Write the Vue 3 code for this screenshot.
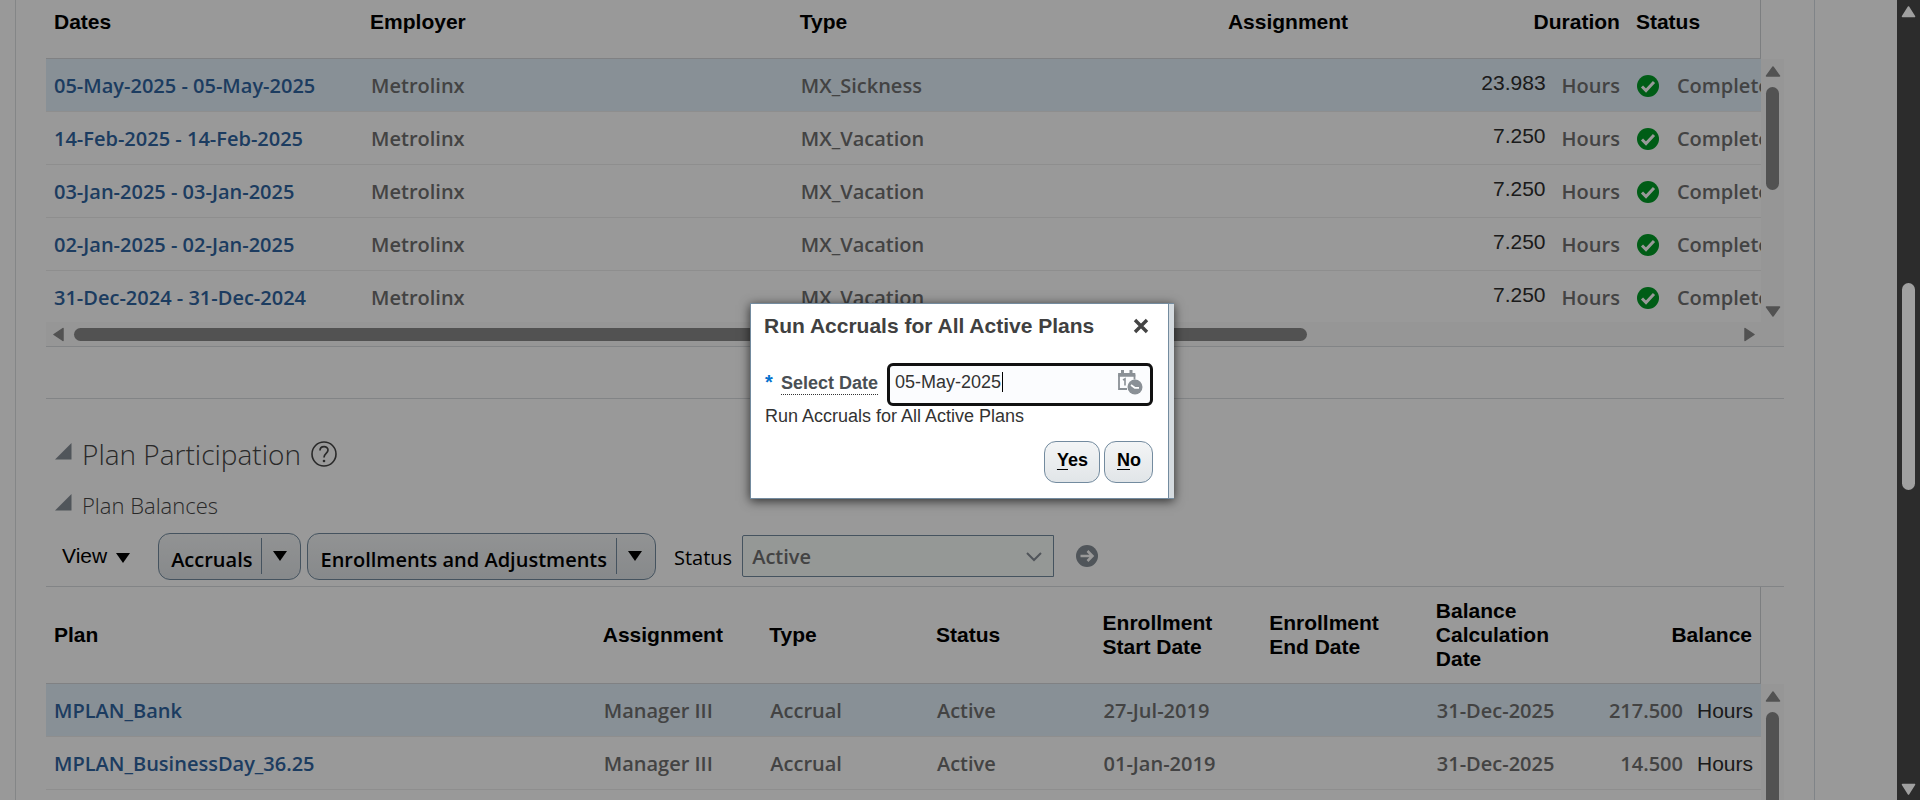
<script setup>
import { ref } from 'vue'

const absences = [
  { dates: '05-May-2025 - 05-May-2025', type: 'MX_Sickness', duration: '23.983' },
  { dates: '14-Feb-2025 - 14-Feb-2025', type: 'MX_Vacation', duration: '7.250' },
  { dates: '03-Jan-2025 - 03-Jan-2025', type: 'MX_Vacation', duration: '7.250' },
  { dates: '02-Jan-2025 - 02-Jan-2025', type: 'MX_Vacation', duration: '7.250' },
  { dates: '31-Dec-2024 - 31-Dec-2024', type: 'MX_Vacation', duration: '7.250' }
]

const plans = [
  { name: 'MPLAN_Bank', start: '27-Jul-2019', balance: '217.500' },
  { name: 'MPLAN_BusinessDay_36.25', start: '01-Jan-2019', balance: '14.500' }
]

const accrualDate = ref('05-May-2025')
const status = ref('Active')
</script>

<template>
  <div class="window">
    <div class="viewport">
      <main class="panel">
        <section class="grid absences">
          <div class="grid-row">
            <div class="table-wrap">
              <table>
                <colgroup>
                  <col class="a-dates"><col class="a-employer"><col class="a-type"><col class="a-assign"><col class="a-duration"><col>
                </colgroup>
                <thead>
                  <tr>
                    <th>Dates</th><th>Employer</th><th>Type</th><th>Assignment</th><th class="right">Duration</th><th>Status</th>
                  </tr>
                </thead>
                <tbody>
                  <tr v-for="(row, i) in absences" :key="row.dates" :class="{ selected: i === 0 }">
                    <td><a href="#">{{ row.dates }}</a></td>
                    <td>Metrolinx</td>
                    <td>{{ row.type }}</td>
                    <td></td>
                    <td><div class="amount wide"><span class="plain raised">{{ row.duration }}</span><span>Hours</span></div></td>
                    <td>
                      <div class="state">
                        <svg width="22" height="22" viewBox="0 0 22 22" aria-hidden="true">
                          <circle cx="11" cy="11" r="11" fill="#009b26" />
                          <path d="M5 11.500l4 4 8-8.500" fill="none" stroke="#fff" stroke-width="3" />
                        </svg>
                        <span>Completed</span>
                      </div>
                    </td>
                  </tr>
                </tbody>
              </table>
            </div>
            <div class="vbar">
              <svg class="arrow" width="16" height="11" viewBox="0 0 16 11"><path d="M8 1l6.500 9h-13z" fill="#898989" stroke="#898989" stroke-width="1.500" stroke-linejoin="round" /></svg>
              <div class="vthumb short"></div>
              <svg class="arrow last" width="16" height="11" viewBox="0 0 16 11"><path d="M8 10l6.500-9h-13z" fill="#898989" stroke="#898989" stroke-width="1.500" stroke-linejoin="round" /></svg>
            </div>
          </div>
          <div class="hbar">
            <svg width="11" height="15" viewBox="0 0 11 15"><path d="M1 7.500l9-6v12z" fill="#898989" stroke="#898989" stroke-width="1.500" stroke-linejoin="round" /></svg>
            <div class="htrack"><div class="hthumb"></div></div>
            <svg width="11" height="15" viewBox="0 0 11 15"><path d="M10 7.500l-9-6v12z" fill="#898989" stroke="#898989" stroke-width="1.500" stroke-linejoin="round" /></svg>
          </div>
        </section>

        <section class="participation">
          <h2>
            <svg class="disclose" width="17" height="17" viewBox="0 0 17 17" aria-hidden="true"><path d="M16.500 0v16.500H0z" fill="#868e96" /></svg>
            <span>Plan Participation</span>
            <svg class="help" width="26" height="26" viewBox="0 0 26 26" role="img" aria-label="Help">
              <circle cx="13" cy="13" r="12" fill="none" stroke="#454545" stroke-width="1.600" />
              <path d="M9 9.500c0-5 8-5 8-.5 0 3.500-4 3.300-4 7.500" fill="none" stroke="#454545" stroke-width="1.700" />
              <circle cx="13" cy="20" r="1.300" fill="#454545" />
            </svg>
          </h2>
          <h3>
            <svg class="disclose" width="17" height="17" viewBox="0 0 17 17" aria-hidden="true"><path d="M16.500 0v16.500H0z" fill="#868e96" /></svg>
            <span>Plan Balances</span>
          </h3>
          <div class="toolbar">
            <button type="button" class="view">View
              <svg width="14" height="10" viewBox="0 0 14 10" aria-hidden="true"><path d="M0 0h14l-7 10z" /></svg>
            </button>
            <div class="split">
              <button type="button" class="main">Accruals</button>
              <button type="button" class="drop" aria-label="Accruals menu"><svg width="14" height="10" viewBox="0 0 14 10"><path d="M0 0h14l-7 10z" /></svg></button>
            </div>
            <div class="split">
              <button type="button" class="main">Enrollments and Adjustments</button>
              <button type="button" class="drop" aria-label="Enrollments menu"><svg width="14" height="10" viewBox="0 0 14 10"><path d="M0 0h14l-7 10z" /></svg></button>
            </div>
            <label for="status">Status</label>
            <div class="select">
              <select id="status" v-model="status"><option>Active</option></select>
              <svg width="16" height="10" viewBox="0 0 16 10" aria-hidden="true"><path d="M1 1l7 7 7-7" fill="none" stroke="#868e96" stroke-width="2" /></svg>
            </div>
            <button type="button" class="go" aria-label="Go">
              <svg width="22" height="22" viewBox="0 0 22 22"><circle cx="11" cy="11" r="11" fill="#868e96" /><path d="M4.500 11h12M11.500 6l5 5-5 5" fill="none" stroke="#fff" stroke-width="2.500" /></svg>
            </button>
          </div>

          <div class="grid plans">
            <div class="grid-row">
              <div class="table-wrap">
                <table>
                  <colgroup>
                    <col><col class="p-col"><col class="p-col"><col class="p-col"><col class="p-col"><col class="p-col"><col class="p-col"><col class="p-col">
                  </colgroup>
                  <thead>
                    <tr>
                      <th>Plan</th><th>Assignment</th><th>Type</th><th>Status</th><th>Enrollment Start Date</th><th>Enrollment End Date</th><th>Balance Calculation Date</th><th class="right">Balance</th>
                    </tr>
                  </thead>
                  <tbody>
                    <tr v-for="(row, i) in plans" :key="row.name" :class="{ selected: i === 0 }">
                      <td><a href="#">{{ row.name }}</a></td>
                      <td>Manager III</td>
                      <td>Accrual</td>
                      <td>Active</td>
                      <td>{{ row.start }}</td>
                      <td></td>
                      <td>31-Dec-2025</td>
                      <td><div class="amount"><span>{{ row.balance }}</span><span class="plain">Hours</span></div></td>
                    </tr>
                    <tr><td colspan="8"></td></tr>
                  </tbody>
                </table>
              </div>
              <div class="vbar">
                <svg class="arrow" width="16" height="11" viewBox="0 0 16 11"><path d="M8 1l6.500 9h-13z" fill="#898989" stroke="#898989" stroke-width="1.500" stroke-linejoin="round" /></svg>
                <div class="vthumb"></div>
              </div>
            </div>
          </div>
        </section>
      </main>
      <div class="scrim"></div>
    </div>

    <div class="page-bar">
      <svg width="15" height="12" viewBox="0 0 15 12"><path d="M7.500 1l6 9.500h-12z" fill="#a0a0a0" stroke="#a0a0a0" stroke-width="1.500" stroke-linejoin="round" /></svg>
      <div class="page-track"><div class="page-thumb"></div></div>
      <svg width="15" height="12" viewBox="0 0 15 12"><path d="M7.500 11l6-9.500h-12z" fill="#a0a0a0" stroke="#a0a0a0" stroke-width="1.500" stroke-linejoin="round" /></svg>
    </div>

    <div class="modal-layer">
      <div class="dialog" role="dialog" aria-labelledby="dialog-title">
        <form class="dialog-body" @submit.prevent>
          <header>
            <h1 id="dialog-title">Run Accruals for All Active Plans</h1>
            <button type="button" class="close" aria-label="Close">
              <svg width="16" height="16" viewBox="0 0 16 16"><path d="M2 2l12 12M14 2L2 14" stroke="#444" stroke-width="3.400" /></svg>
            </button>
          </header>
          <div class="field">
            <span class="required">*</span>
            <label for="accrual-date">Select Date</label>
            <div class="box">
              <input id="accrual-date" v-model="accrualDate" type="text">
              <span class="caret"></span>
              <button type="button" aria-label="Choose date">
                <svg width="25" height="25" viewBox="0 0 25 25">
                  <path d="M1 5.500h15.500v4M1 4.500v14.500h8" fill="none" stroke="#8a9096" stroke-width="1.800" />
                  <path d="M.1 3h17.200v3.500H.1z" fill="#8a9096" />
                  <path d="M3 0h3v5H3zM11.500 0h3v5h-3z" fill="#8a9096" />
                  <path d="M5 10l2-1.200v6.700" fill="none" stroke="#8a9096" stroke-width="1.600" />
                  <circle cx="17" cy="17" r="7.500" fill="#8a9096" />
                  <path d="M13 15l3.800 2.800h4.200" fill="none" stroke="#fff" stroke-width="1.700" />
                </svg>
              </button>
            </div>
          </div>
          <p>Run Accruals for All Active Plans</p>
          <footer>
            <button type="button"><u>Y</u>es</button>
            <button type="button"><u>N</u>o</button>
          </footer>
        </form>
      </div>
    </div>
  </div>
</template>

<style>
body { background: #999; }
</style>

<style scoped>
* { box-sizing: border-box; }
.window {
  display: flex;
  height: 100vh;
  overflow: hidden;
  font-family: "Liberation Sans", Arial, sans-serif;
  font-size: 21px;
  line-height: 24px;
  color: #000;
}
button, select, input { font: inherit; color: inherit; margin: 0; padding: 0; border: 0; background: none; }
svg { display: block; flex: none; }
.viewport { position: relative; flex: 1; min-width: 0; background: #fff; overflow: hidden; }
.scrim { position: absolute; inset: 0; background: rgba(0, 0, 0, 0.4); }
.panel {
  margin: 0 82px 0 15px;
  padding: 0 30px;
  min-height: 100vh;
  border-left: 1px solid #dcdfe2;
  border-right: 1px solid #d5dde3;
}
.grid { border-bottom: 1px solid #d9dcdf; }
.grid-row { display: flex; }
.table-wrap { flex: 1; min-width: 0; }
table { width: 100%; table-layout: fixed; border-collapse: separate; border-spacing: 0; }
th {
  padding: 10px 8px 0 8px;
  text-align: left;
  font-weight: bold;
  vertical-align: top;
  border-bottom: 1px solid #d5d8db;
}
th:last-child { border-right: 1px solid #cfd2d5; }
.absences th { height: 59px; }
.plans th { height: 97px; vertical-align: middle; padding-top: 0; }
td {
  height: 53px;
  padding: 2px 8px 0 9px;
  border-bottom: 1px solid #ededed;
  font-family: "Open Sans", "Noto Sans", sans-serif;
  font-size: 20px;
  font-weight: 600;
  color: #707070;
  white-space: nowrap;
  overflow: hidden;
}
td:first-child { padding-left: 8px; }
.absences tr:last-child td { height: 51px; border-bottom: 0; }
.selected td { background: #e3f0fb; }
a { color: #3064a0; text-decoration: none; }
.right { text-align: right; }
.a-dates { width: 18.430%; }
.a-employer { width: 25.060%; }
.a-type { width: 24.960%; }
.a-assign { width: 9.680%; }
.a-duration { width: 14.110%; }
.p-col { width: 9.715%; }
.amount { display: flex; justify-content: flex-end; gap: 14px; }
.amount.wide { gap: 16px; }
.plain { font-family: "Liberation Sans", Arial, sans-serif; font-size: 21px; font-weight: 400; color: #2d2d2d; }
.raised { margin-top: -3px; }
.state { display: flex; gap: 18px; align-items: center; }
.vbar {
  width: 23px;
  display: flex;
  flex-direction: column;
  align-items: center;
  margin-top: 59px;
  padding: 7px 0 5px;
  gap: 10px;
  background: #fafafa;
}
.plans .vbar { margin-top: 97px; }
.vthumb { width: 13px; flex: 1; border-radius: 7px; background: #898989; }
.vthumb.short { flex: 0 0 103px; }
.arrow.last { margin-top: auto; }
.hbar { display: flex; align-items: center; gap: 10px; height: 24px; padding: 0 29px 0 7px; background: #fafafa; }
.htrack { flex: 1; }
.hthumb { width: 74.300%; height: 13px; border-radius: 7px; background: #898989; }
.participation { margin-top: 51px; border-top: 1px solid #d9dcdf; }
h2, h3 {
  display: flex;
  align-items: center;
  margin: 0;
  padding-left: 9px;
  font-family: "Open Sans", "Noto Sans", sans-serif;
  font-weight: 300;
  color: #454545;
}
h2 { padding-top: 34px; font-size: 28px; line-height: 42px; }
h3 { margin-top: 13px; font-size: 22px; line-height: 34px; }
.disclose { margin: 0 10px 6px 0; }
.help { margin-left: 10px; }
.toolbar { display: flex; align-items: center; height: 64px; padding: 8px 0 4px 16px; }
.view { display: flex; align-items: center; gap: 9px; margin-right: 28px; }
.view svg { margin-top: 4px; }
.split {
  display: flex;
  align-items: center;
  height: 47px;
  margin-right: 6px;
  border: 1px solid #738b9f;
  border-radius: 12px;
  background: linear-gradient(#f3f5f6, #e1e5e8);
}
.main, .toolbar label, select {
  font-family: "Open Sans", "Noto Sans", sans-serif;
  font-size: 20px;
}
.main { padding: 7px 9px 0 12px; font-weight: 600; }
.drop { display: flex; align-items: center; height: 36px; padding: 0 13px 0 11px; border-left: 1px solid #738b9f; }
.toolbar label { margin-left: 12px; padding-top: 4px; font-weight: 400; }
.select { position: relative; width: 312px; margin-left: 10px; }
.select select {
  appearance: none;
  width: 100%;
  height: 42px;
  padding: 2px 0 0 9px;
  border: 1px solid #738b9f;
  border-radius: 2px 0 0 2px;
  background: #f9fdfa;
  font-weight: 600;
  color: #707070;
}
.select svg { position: absolute; right: 12px; top: 17px; }
.go { margin-left: 22px; }
.plans { border-top: 1px solid #d9dcdf; }

.page-bar { width: 23px; display: flex; flex-direction: column; align-items: center; padding: 6px 0 5px; background: #2c2c2c; }
.page-track { flex: 1; display: flex; flex-direction: column; }
.page-track::before { content: ""; flex: 265; }
.page-track::after { content: ""; flex: 293; }
.page-thumb { width: 13px; flex: 208; border-radius: 7px; background: #a0a0a0; }

.modal-layer { position: fixed; inset: 0; display: flex; align-items: center; justify-content: center; padding: 1px 0 0 4px; }
.dialog {
  width: 424px;
  padding-right: 5px;
  border: 1px solid #738b9f;
  border-right: 0;
  background: #d5dbe0;
  box-shadow: 0 2px 10px rgba(0, 0, 0, 0.7);
}
.dialog-body { padding: 10px 15px 15px 13px; background: #fff; border-right: 1px solid #738b9f; }
header { display: flex; align-items: center; justify-content: space-between; }
h1 { margin: 0; font-size: 21px; line-height: 24px; color: #404040; }
.close { margin-right: 4px; }
.field { display: flex; align-items: center; margin-top: 25px; font-size: 18px; }
.required { width: 17px; padding-left: 1px; align-self: flex-start; margin-top: 7px; font-size: 20px; font-weight: bold; color: #0572ce; }
.field label { font-weight: bold; line-height: 21px; color: #4a4f54; border-bottom: 1px dotted #333; }
.box {
  flex: 1;
  display: flex;
  align-items: center;
  height: 43px;
  margin-left: 9px;
  padding: 0 7px 4px 5px;
  border: 3px solid #111;
  border-radius: 6px;
  background: #fbfcfe;
}
.box input { width: 107px; color: #333; outline: 0; }
.caret { width: 1px; height: 20px; background: #000; }
.box button { margin-left: auto; }
p { margin: 0 0 0 1px; font-size: 18px; line-height: 20px; color: #333; }
footer { display: flex; justify-content: flex-end; gap: 4px; margin-top: 15px; }
footer button {
  height: 42px;
  padding: 0 11px 4px 12px;
  border: 1px solid #738b9f;
  border-radius: 12px;
  background: linear-gradient(#f3f5f6, #e1e5e8);
  font-size: 18px;
  font-weight: bold;
}
footer u { text-underline-offset: 3px; }
</style>
